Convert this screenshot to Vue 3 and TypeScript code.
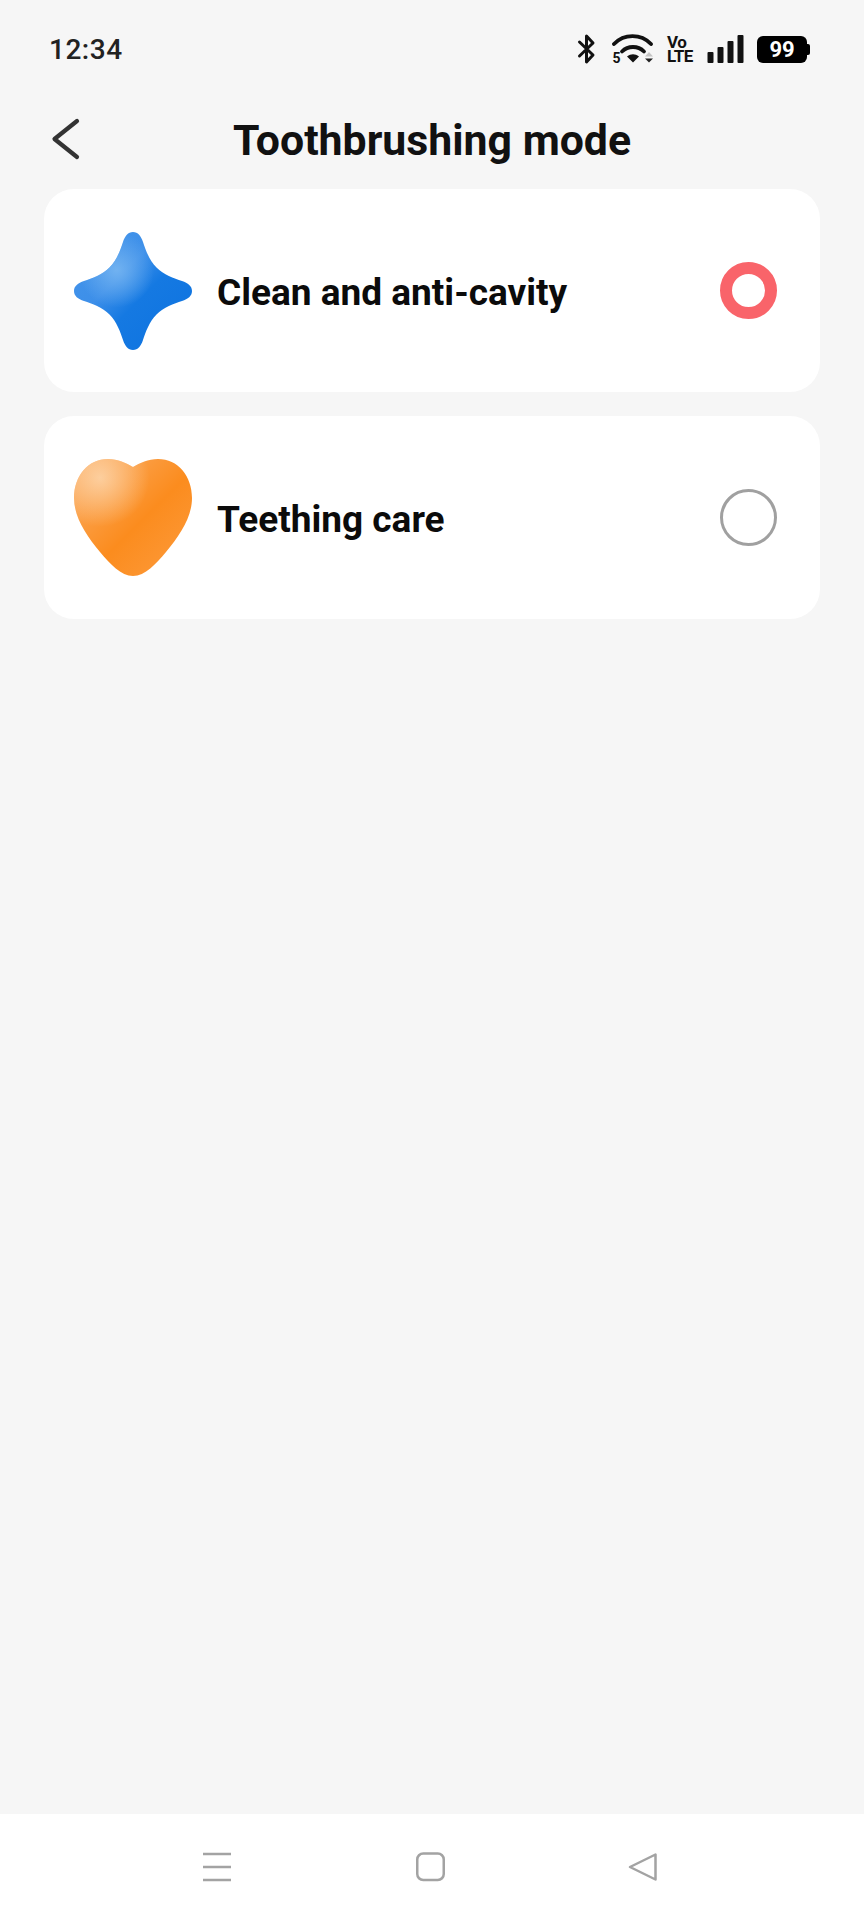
<script setup lang="ts">
interface Mode { id: string; label: string; selected: boolean }
const modes: Mode[] = [
  { id: 'star', label: 'Clean and anti-cavity', selected: true },
  { id: 'heart', label: 'Teething care', selected: false },
]
const starPath =
  'M59 0 C64 0 67 4 69 10 C71.5 18 75.5 28.5 82.5 35.5 C89.5 42.5 100 46.5 108 49 C114 51 118 54 118 59 ' +
  'C118 64 114 67 108 69 C100 71.5 89.5 75.5 82.5 82.5 C75.5 89.5 71.5 100 69 108 C67 114 64 118 59 118 ' +
  'C54 118 51 114 49 108 C46.5 100 42.5 89.5 35.5 82.5 C28.5 75.5 18 71.5 10 69 C4 67 0 64 0 59 ' +
  'C0 54 4 51 10 49 C18 46.5 28.5 42.5 35.5 35.5 C42.5 28.5 46.5 18 49 10 C51 4 54 0 59 0 Z'
const heartPath =
  'M59 8 C66 4 74 0 84 0 C104 0 118 17 118 39 C118 58 106 76 92 93 C82 105 71 117 59 117 ' +
  'C47 117 36 105 26 93 C12 76 0 58 0 39 C0 17 14 0 34 0 C44 0 52 4 59 8 Z'
</script>

<template>
  <div class="page">
    <div class="status">
      <span class="time">12:34</span>
      <div class="status-icons">
        <svg width="20" height="32" viewBox="0 0 20 32" class="bt">
          <path d="M2.500 9 L16 22 L9.500 29 V3 L16 10 L2.500 23" fill="none" stroke="#111" stroke-width="3" stroke-linejoin="round" stroke-linecap="round" />
        </svg>
        <svg width="42" height="32" viewBox="0 0 42 32" class="wifi">
          <path d="M2 11 C12 0.500 29 0.500 39 11" fill="none" stroke="#111" stroke-width="3.800" stroke-linecap="round" />
          <path d="M10 18.500 C16 12.500 26 12.500 32 18.500" fill="none" stroke="#111" stroke-width="3.800" stroke-linecap="round" />
          <path d="M15 23.500 C19 20.500 23 20.500 27 23.500 L21 29.500 Z" fill="#111" />
          <text x="0.500" y="29.500" class="five">5</text>
          <path d="M33 23.500 L37 19 L41 23.500 Z" fill="#c4c4c4" />
          <path d="M33 25.500 H41 L37 29.500 Z" fill="#222" />
        </svg>
        <div class="volte"><span>Vo</span><span>LTE</span></div>
        <svg width="37" height="30" viewBox="0 0 37 30" class="signal">
          <rect x="0.500" y="18" width="6" height="11" rx="1" fill="#111" />
          <rect x="10.500" y="13" width="6" height="16" rx="1" fill="#111" />
          <rect x="20.500" y="7" width="6" height="22" rx="1" fill="#111" />
          <rect x="30.500" y="1" width="6" height="28" rx="1" fill="#111" />
        </svg>
        <div class="battery"><span>99</span></div>
      </div>
    </div>

    <header class="head">
      <svg class="back" width="32" height="48" viewBox="0 0 32 48">
        <path d="M27 5 L4.500 23 L27 41" fill="none" stroke="#333" stroke-width="4.200" stroke-linecap="round" stroke-linejoin="round" />
      </svg>
      <h1>Toothbrushing mode</h1>
    </header>

    <main class="list">
      <div v-for="m in modes" :key="m.id" class="card">
        <svg v-if="m.id === 'star'" class="art" width="118" height="118" viewBox="0 0 118 118">
          <defs>
            <linearGradient id="starBase" x1="0.1" y1="0.1" x2="0.9" y2="0.9">
              <stop offset="0" stop-color="#4394ea" />
              <stop offset="0.35" stop-color="#3d8fe9" />
              <stop offset="0.58" stop-color="#1579e2" />
              <stop offset="1" stop-color="#0f74e0" />
            </linearGradient>
            <radialGradient id="starGlow" cx="0.36" cy="0.32" r="0.32">
              <stop offset="0" stop-color="#7ab8f2" stop-opacity="0.85" />
              <stop offset="1" stop-color="#7ab8f2" stop-opacity="0" />
            </radialGradient>
          </defs>
          <path :d="starPath" fill="url(#starBase)" />
          <path :d="starPath" fill="url(#starGlow)" />
        </svg>
        <svg v-else class="art" width="118" height="118" viewBox="0 0 118 118">
          <defs>
            <linearGradient id="heartBase" x1="0" y1="0" x2="1" y2="1">
              <stop offset="0" stop-color="#fbb06a" />
              <stop offset="0.55" stop-color="#fb8c1e" />
              <stop offset="1" stop-color="#fd9c3e" />
            </linearGradient>
            <radialGradient id="heartGlow" cx="0.22" cy="0.16" r="0.42">
              <stop offset="0" stop-color="#fdd3a6" stop-opacity="0.9" />
              <stop offset="1" stop-color="#fdd3a6" stop-opacity="0" />
            </radialGradient>
          </defs>
          <path :d="heartPath" fill="url(#heartBase)" />
          <path :d="heartPath" fill="url(#heartGlow)" />
        </svg>
        <span class="label">{{ m.label }}</span>
        <span class="radio" :class="{ on: m.selected }"></span>
      </div>
    </main>

    <nav class="nav">
      <svg width="30" height="30" viewBox="0 0 30 30">
        <path d="M1 2 H29 M1 15 H29 M1 28 H29" stroke="#a3a3a3" stroke-width="2.500" fill="none" />
      </svg>
      <svg width="30" height="30" viewBox="0 0 30 30">
        <rect x="2.250" y="1.500" width="26.500" height="26.500" rx="6" fill="none" stroke="#a3a3a3" stroke-width="2.500" />
      </svg>
      <svg width="30" height="30" viewBox="0 0 30 30">
        <path d="M27.500 2.500 V27.500 L2 15 Z" fill="none" stroke="#a3a3a3" stroke-width="2.500" stroke-linejoin="round" />
      </svg>
    </nav>
  </div>
</template>

<style scoped>
.page {
  width: 864px;
  height: 1920px;
  background: #f6f6f6;
  display: flex;
  flex-direction: column;
  font-family: Roboto, "Liberation Sans", sans-serif;
  color: #111;
}
.status {
  height: 96px;
  padding: 2px 54px 0 49px;
  display: flex;
  align-items: center;
  justify-content: space-between;
  box-sizing: border-box;
  flex: none;
}
.time {
  font-size: 28px;
  font-weight: 500;
  letter-spacing: 0.5px;
  color: #222;
}
.status-icons {
  display: flex;
  align-items: center;
}
.bt { margin-right: 15px; }
.wifi { margin-right: 13px; }
.five {
  font-family: Roboto, sans-serif;
  font-size: 14px;
  font-weight: 700;
  fill: #111;
}
.volte {
  display: flex;
  flex-direction: column;
  align-items: flex-start;
  font-size: 17px;
  font-weight: 700;
  line-height: 14px;
  letter-spacing: -0.5px;
  width: 27px;
  margin-right: 13px;
}
.signal { margin-right: 13px; }
.battery {
  width: 50px;
  height: 27px;
  background: #000;
  border-radius: 6px;
  position: relative;
  display: flex;
  align-items: center;
  justify-content: center;
  color: #fff;
  font-size: 22px;
  font-weight: 700;
  margin-right: 3px;
}
.battery::after {
  content: "";
  position: absolute;
  right: -3px;
  top: 8px;
  width: 3px;
  height: 11px;
  background: #000;
  border-radius: 0 2px 2px 0;
}
.head {
  height: 93px;
  box-sizing: border-box;
  padding-bottom: 5px;
  position: relative;
  display: flex;
  align-items: center;
  justify-content: center;
  flex: none;
}
.back {
  position: absolute;
  left: 50px;
  top: 20px;
}
h1 {
  margin: 0;
  font-size: 42.800px;
  font-weight: 700;
  color: #111;
}
.list {
  flex: 1;
  padding: 0 44px;
  display: flex;
  flex-direction: column;
  gap: 24px;
}
.card {
  height: 203px;
  background: #fff;
  border-radius: 30px;
  display: flex;
  align-items: center;
  padding: 0 43px 0 30px;
}
.art { flex: none; }
.label {
  margin-left: 25px;
  flex: 1;
  font-size: 37px;
  font-weight: 700;
  color: #0b0b0b;
  padding-top: 4px;
}
.radio {
  width: 57px;
  height: 57px;
  box-sizing: border-box;
  border: 3px solid #a0a0a0;
  border-radius: 50%;
  flex: none;
}
.radio.on {
  border: 12.500px solid #f9646a;
}
.nav {
  height: 106px;
  background: #fff;
  display: flex;
  align-items: center;
  flex: none;
  padding: 0 206px 0 202px;
  justify-content: space-between;
}
</style>
